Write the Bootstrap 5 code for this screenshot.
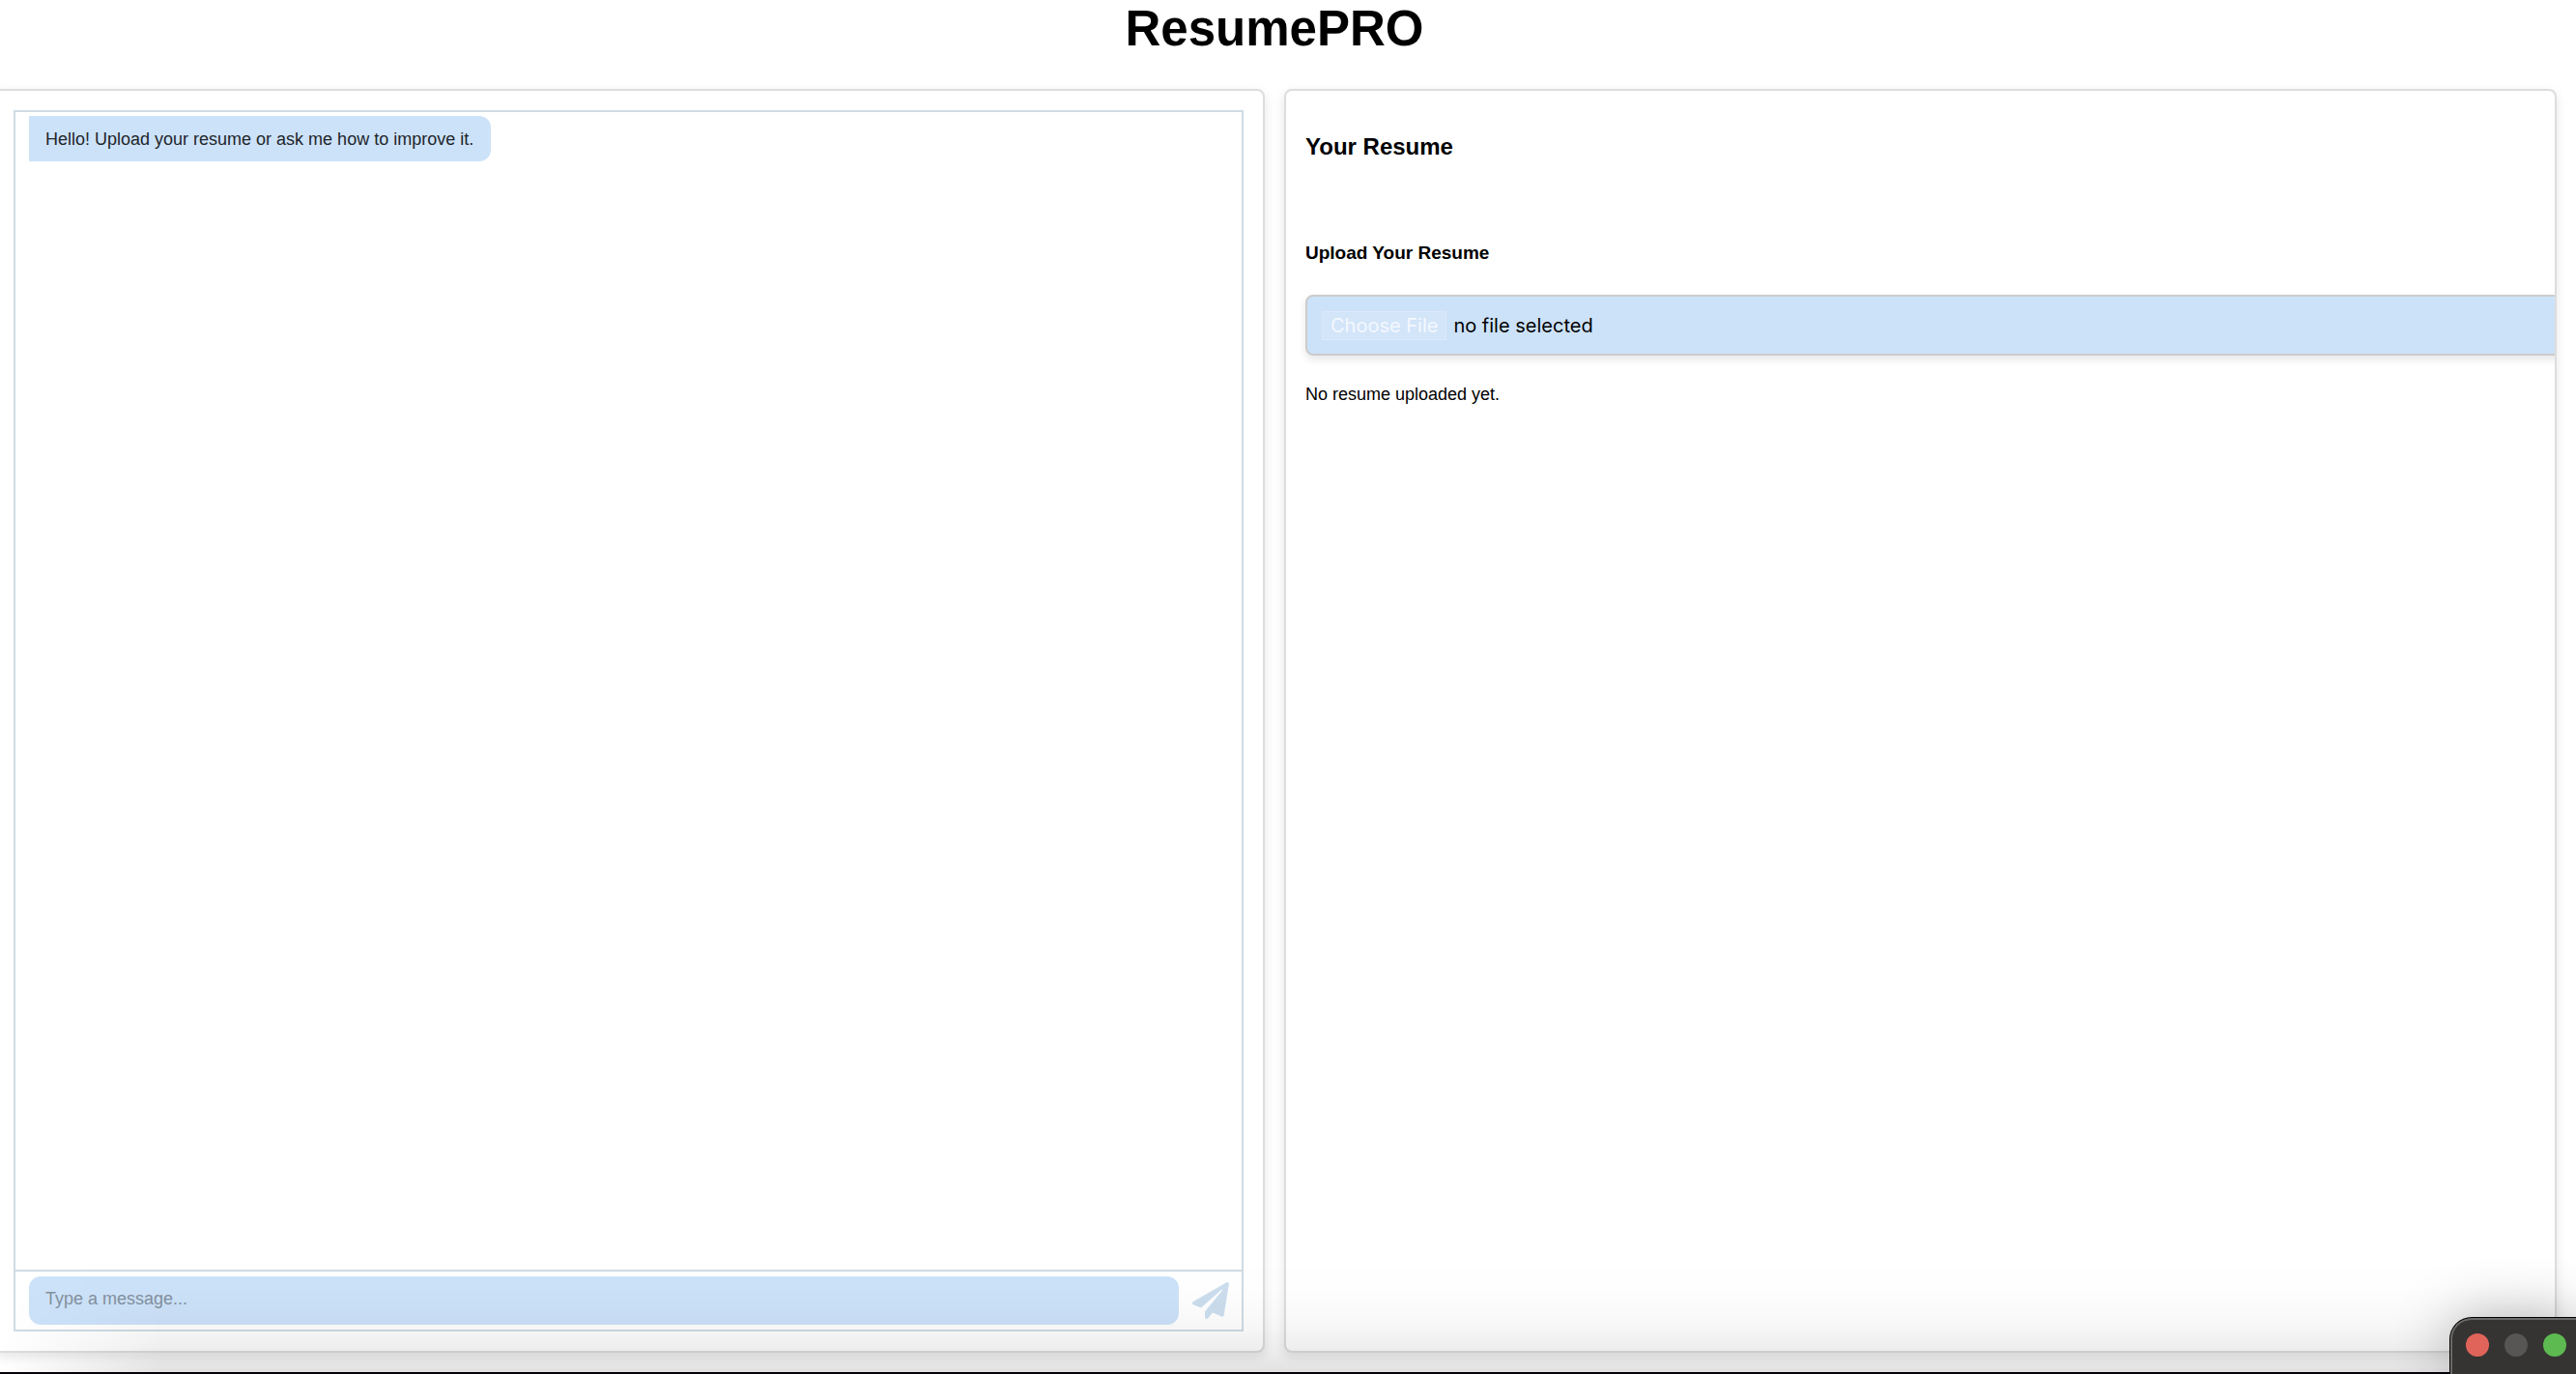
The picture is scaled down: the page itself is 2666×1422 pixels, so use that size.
<!DOCTYPE html>
<html lang="en">
<head>
<meta charset="utf-8">
<meta name="viewport" content="width=device-width, initial-scale=1">
<title>ResumePRO</title>
<link href="https://cdn.jsdelivr.net/npm/bootstrap@5.3.0/dist/css/bootstrap.min.css" rel="stylesheet">
<style>
body { font-family: "Liberation Sans", Arial, sans-serif; font-size: 18px; line-height: 24px; color: #000; background: #fff; }
.page-shell { height: 100vh; padding: 0 20px 22px 0; margin-left: -8px; }
.brand-title { font-size: 51px; line-height: 60px; font-weight: 700; margin-bottom: 32px; }
.panels { gap: 20px; }
.panel { flex: 1 1 0; min-width: 0; border: 2px solid #ddd; border-radius: 8px; padding: 20px; background: #fff; box-shadow: 0 4px 12px rgba(0,0,0,.1); }
.chat-frame { border: 2px solid #d0dbe3; }
.chat-log { padding: 4px 14px; }
.bubble { background: #cce2f9; color: #212529; padding: 12px 18px 11px 17px; border-radius: 0 12px 12px 0; }
.chat-form { border-top: 2px solid #d0dbe3; padding: 5px 13px 5px 14px; gap: 14px; }
.chat-text { height: 50px; border: 0; border-radius: 12px; background: #cce2f9; font-size: 18px; padding: 0 16px 4px 17px; }
.chat-text:focus { background: #cce2f9; }
.chat-text::placeholder { color: #84919e; }
.send-btn { color: #ccdeee; line-height: 0; }
.resume-title { font-size: 24px; line-height: 28px; font-weight: 700; margin: 24px 0 84px; }
.upload-title { font-size: 19px; line-height: 24px; font-weight: 700; margin-bottom: 31px; }
.file-box { height: 63px; width: 105%; border: 2px solid #ccc; border-radius: 8px; background: #cce2f9; padding: 0 15px; gap: 7px; box-shadow: 0 4px 8px rgba(0,0,0,.1); font-family: Inter, sans-serif; font-size: 20px; }
.file-pick { border: 1px solid #dbe9fa; background: #d3e5f9; color: #f3f8fe; padding: 2px 8px; }
.window-shade { height: 130px; pointer-events: none; background: linear-gradient(to bottom, rgba(0,0,0,0), rgba(0,0,0,.005) 30%, rgba(0,0,0,.02) 52%, rgba(0,0,0,.04) 66%, rgba(0,0,0,.075) 83%, rgba(0,0,0,.12)); -webkit-mask-image: linear-gradient(to right, transparent, #000 170px); mask-image: linear-gradient(to right, transparent, #000 170px); }
.screen-edge { height: 2px; background: #05010a; }
.dark-window { z-index: 1040; width: 130px; height: 58px; border: 2px solid #6a6a69; border-width: 2px 0 0 2px; border-radius: 22px 0 0 0; background: #353432; box-shadow: 0 0 0 1px #000, 0 0 60px rgba(0,0,0,.3); padding: 14px 0 0 14px; gap: 16px; }
.dot { width: 24px; height: 24px; border-radius: 50%; flex: none; }
.dot-close { background: #e1645a; }
.dot-min { background: #575655; }
.dot-zoom { background: #5dba50; }
</style>
</head>
<body class="overflow-hidden">
<div class="page-shell d-flex flex-column">
  <h1 class="brand-title text-center">ResumePRO</h1>
  <main class="panels d-flex flex-grow-1">
    <section class="panel d-flex">
      <div class="chat-frame d-flex flex-column flex-grow-1">
        <div class="chat-log d-flex flex-grow-1 align-items-start">
          <div class="bubble">Hello! Upload your resume or ask me how to improve it.</div>
        </div>
        <form class="chat-form d-flex align-items-center">
          <input type="text" class="chat-text form-control" placeholder="Type a message..." aria-label="Message">
          <button type="button" class="send-btn btn p-0 border-0" aria-label="Send">
            <svg width="38" height="38" viewBox="0 0 512 512" fill="currentColor" aria-hidden="true"><path d="M476 3.2L12.5 270.6c-18.1 10.4-15.8 35.6 2.2 43.2L121 358.4l287.3-253.2c5.5-4.9 13.3 2.6 8.6 8.3L176 407v80.5c0 23.6 28.5 32.9 42.5 15.8L282 426l124.6 52.2c14.2 6 30.4-2.9 33-18.2l72-432C515 7.8 493.3-6.8 476 3.2z"/></svg>
          </button>
        </form>
      </div>
    </section>
    <section class="panel overflow-hidden">
      <h2 class="resume-title">Your Resume</h2>
      <h3 class="upload-title">Upload Your Resume</h3>
      <label class="file-box d-flex align-items-center">
        <input type="file" class="visually-hidden">
        <span class="file-pick">Choose File</span>
        <span>no file selected</span>
      </label>
      <p class="mt-4 pt-1">No resume uploaded yet.</p>
    </section>
  </main>
</div>
<div class="window-shade fixed-bottom"></div>
<div class="screen-edge fixed-bottom"></div>
<div class="dark-window d-flex position-fixed bottom-0 end-0">
  <span class="dot dot-close"></span><span class="dot dot-min"></span><span class="dot dot-zoom"></span>
</div>
<script src="https://cdn.jsdelivr.net/npm/bootstrap@5.3.0/dist/js/bootstrap.bundle.min.js"></script>
</body>
</html>
